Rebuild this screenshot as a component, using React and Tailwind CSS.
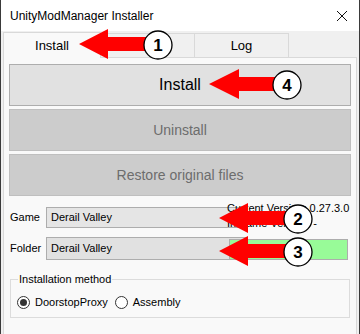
const arrows = [
  { tip: 78, y: 44, base: 107, end: 146, cx: 157, n: "1" },
  { tip: 208, y: 84, base: 238, end: 276, cx: 286, n: "4" },
  { tip: 218, y: 218, base: 247, end: 286, cx: 297, n: "2" },
  { tip: 218, y: 251, base: 247, end: 286, cx: 297, n: "3" },
]

function Callouts() {
  return (
    <svg className="pointer-events-none absolute inset-0 z-20" width="360" height="334">
      {arrows.map((a) => (
        <g key={a.n}>
          <polygon
            fill="#ff0000"
            points={`${a.tip},${a.y} ${a.base},${a.y - 15} ${a.base},${a.y - 7} ${a.end},${a.y - 7} ${a.end},${a.y + 7} ${a.base},${a.y + 7} ${a.base},${a.y + 15}`}
          />
          <circle cx={a.cx} cy={a.y + 1} r="14" fill="#fff" stroke="#000" strokeWidth="1.3" />
          <text
            x={a.cx}
            y={a.y + 7}
            textAnchor="middle"
            fontSize="17"
            fontWeight="700"
            fontFamily="Liberation Sans, Arial, sans-serif"
            fill="#000"
          >
            {a.n}
          </text>
        </g>
      ))}
    </svg>
  )
}

function Radio({ checked, label }) {
  return (
    <label className="flex items-center gap-[5px]">
      <span className="flex h-[13px] w-[13px] items-center justify-center rounded-full border border-[#333] bg-white">
        {checked && <span className="h-[7px] w-[7px] rounded-full bg-[#333]" />}
      </span>
      <span>{label}</span>
    </label>
  )
}

export default function App() {
  return (
    <div
      className="relative h-[334px] w-[360px] overflow-hidden border-x border-[#3a3a3a] bg-[#f0f0f0] text-[11px] text-black"
      style={{ fontFamily: "'Liberation Sans', Arial, sans-serif" }}
    >
      {/* title bar */}
      <div className="flex h-[31px] items-center justify-between bg-white pl-[9px] pr-[9px] text-[12px]">
        <span>UnityModManager Installer</span>
        <svg width="12" height="12" viewBox="0 0 12 12" className="mr-[2px]">
          <path d="M1 1 L11 11 M11 1 L1 11" stroke="#111" strokeWidth="1" />
        </svg>
      </div>

      {/* tabs */}
      <div className="flex h-[26px] items-end pl-[2px] text-[13px]">
        <div className="relative z-10 -mb-px flex h-[26px] w-[98px] items-center justify-center border border-b-0 border-[#d9d9d9] bg-[#f9f9f9]">
          Install
        </div>
        <div className="flex h-[24px] w-[94px] items-center justify-center border-t border-r border-[#d9d9d9] bg-[#f0f0f0]">
          Mods
        </div>
        <div className="flex h-[24px] w-[94px] items-center justify-center border-t border-r border-[#d9d9d9] bg-[#f0f0f0]">
          Log
        </div>
      </div>

      {/* tab page */}
      <div className="mx-[2px] h-[280px] border border-[#d9d9d9] bg-[#f9f9f9] px-[5px] pt-[6px]">
        <div className="flex flex-col gap-[3px]">
          <button className="h-[42px] border border-[#adadad] bg-[#e1e1e1] text-[16px] text-black">
            Install
          </button>
          <button className="h-[42px] border border-[#bfbfbf] bg-[#cccccc] text-[14px] text-[#6d6d6d]">
            Uninstall
          </button>
          <button className="h-[42px] border border-[#bfbfbf] bg-[#cccccc] text-[14px] text-[#6d6d6d]">
            Restore original files
          </button>
        </div>

        <div className="mt-[11px] flex">
          <div className="flex w-[237px] flex-col gap-[9px]">
            <div className="flex h-[21px] items-center">
              <span className="w-[37px] pl-px">Game</span>
              <div className="flex h-[21px] flex-1 items-center justify-between border border-[#adadad] bg-[#e5e5e5] pl-[4px] pr-[8px]">
                <span>Derail Valley</span>
                <svg width="9" height="6" viewBox="0 0 9 6">
                  <path d="M0.5 0.5 L4.5 4.5 L8.5 0.5" fill="none" stroke="#555" strokeWidth="1" />
                </svg>
              </div>
            </div>
            <div className="flex h-[23px] items-center">
              <span className="w-[37px] pl-px">Folder</span>
              <div className="flex h-[23px] flex-1 items-center border border-[#adadad] bg-[#e1e1e1] pl-[4px]">
                Derail Valley
              </div>
            </div>
          </div>
          <div className="ml-[-20px] mt-[-6px] flex flex-col pl-[1px]">
            <div className="h-[15px] leading-[15px]">Current Version: 0.27.3.0</div>
            <div className="h-[15px] leading-[15px]">In-game Version: -</div>
            <div className="ml-[2px] mt-[8px] flex h-[21px] w-[119px] items-center justify-center border border-[#adadad] bg-[#98fb98]">
              Update
            </div>
          </div>
        </div>

        <fieldset className="mt-[13px] ml-[1px] mr-[1px] h-[45px] border border-[#dcdcdc] px-[6px]">
          <legend className="ml-[1px] px-[1px] leading-[12px]">Installation method</legend>
          <div className="mt-[9px] flex items-center gap-[7px]">
            <Radio checked label="DoorstopProxy" />
            <Radio label="Assembly" />
          </div>
        </fieldset>
      </div>

      <Callouts />
    </div>
  )
}
